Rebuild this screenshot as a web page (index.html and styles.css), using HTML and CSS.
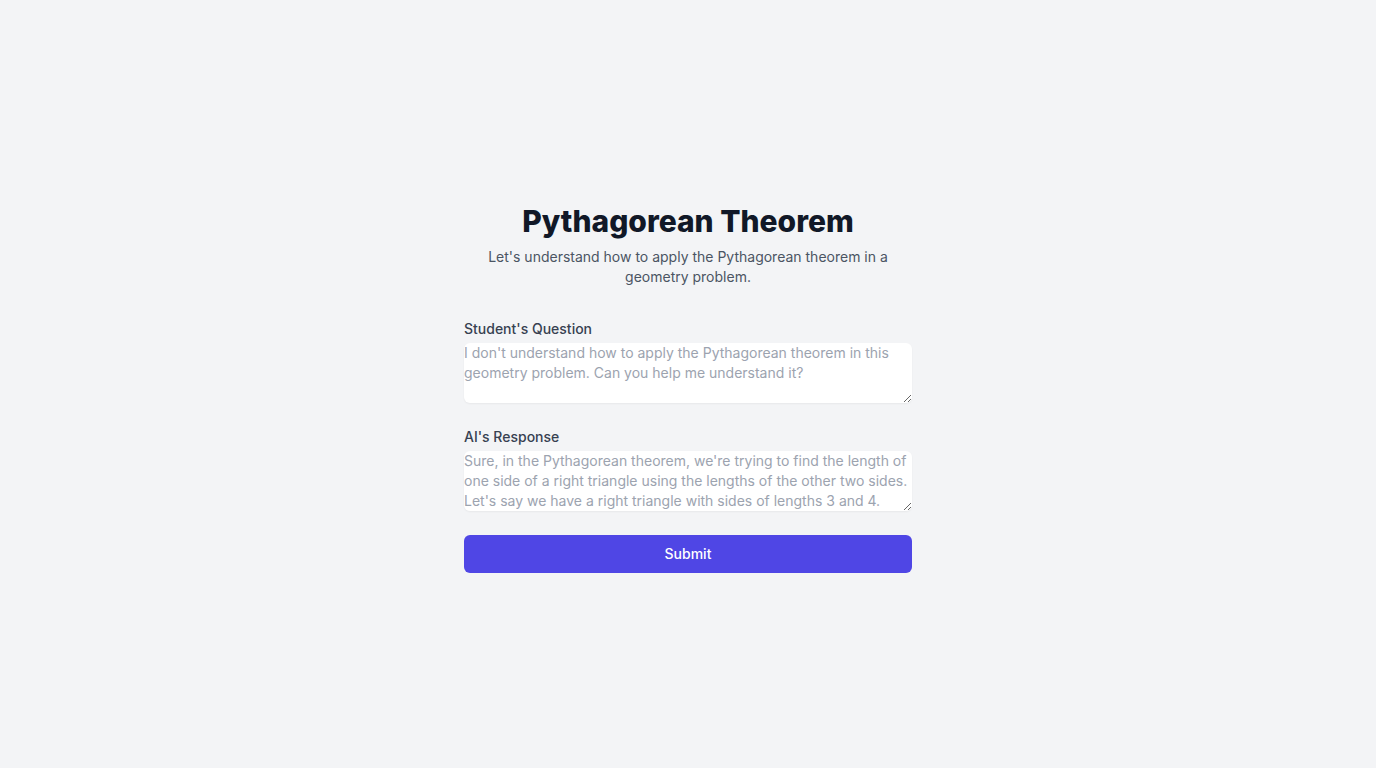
FILE: index.html
```html
<!DOCTYPE html>
<html lang="en">
<head>
<meta charset="utf-8">
<title>Pythagorean Theorem</title>
<link rel="stylesheet" href="styles.css">
</head>
<body>
<main class="page">
  <div class="panel">
    <header class="head">
      <h1 class="title">Pythagorean Theorem</h1>
      <p class="subtitle">Let's understand how to apply the Pythagorean theorem in a geometry problem.</p>
    </header>
    <form class="form">
      <div class="field">
        <label class="label" for="q">Student's Question</label>
        <textarea id="q" class="input" rows="3" placeholder="I don't understand how to apply the Pythagorean theorem in this geometry problem. Can you help me understand it?"></textarea>
      </div>
      <div class="field">
        <label class="label" for="a">AI's Response</label>
        <textarea id="a" class="input" rows="3" placeholder="Sure, in the Pythagorean theorem, we're trying to find the length of one side of a right triangle using the lengths of the other two sides. Let's say we have a right triangle with sides of lengths 3 and 4. According to the Pythagorean theorem, the hypotenuse is 5."></textarea>
      </div>
      <button type="button" class="submit">Submit</button>
    </form>
  </div>
</main>
</body>
</html>
```
FILE: styles.css
```css
* { box-sizing: border-box; }
html, body { margin: 0; padding: 0; }
body {
  background: #f3f4f6;
  font-family: Inter, "Liberation Sans", sans-serif;
  color: #111827;
}
.page {
  min-height: 100vh;
  display: flex;
  align-items: center;
  justify-content: center;
  padding: 8px 16px 0;
}
.panel {
  width: 448px;
}
.head { text-align: center; }
.title {
  margin: 0;
  font-size: 30px;
  line-height: 36px;
  font-weight: 800;
  color: #111827;
}
.subtitle {
  margin: 8px 0 0;
  font-size: 14px;
  line-height: 20px;
  color: #4b5563;
}
.form {
  margin-top: 32px;
  display: flex;
  flex-direction: column;
  gap: 24px;
}
.field { display: flex; flex-direction: column; }
.label {
  font-size: 14px;
  line-height: 20px;
  font-weight: 500;
  color: #374151;
}
.input {
  margin-top: 4px;
  display: block;
  width: 100%;
  padding: 0;
  border: 0;
  border-radius: 6px;
  background: #fff;
  box-shadow: 0 1px 2px rgba(0,0,0,0.05);
  font-family: inherit;
  font-size: 14px;
  line-height: 20px;
  color: #111827;
  outline: none;
}
.input::placeholder { color: #9ca3af; }
.submit {
  display: block;
  width: 100%;
  padding: 8px 16px;
  border: 1px solid transparent;
  border-radius: 6px;
  background: #4f46e5;
  color: #fff;
  font-family: inherit;
  font-size: 14px;
  line-height: 20px;
  font-weight: 500;
  cursor: pointer;
}
```
